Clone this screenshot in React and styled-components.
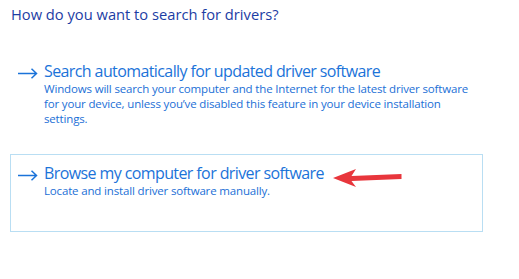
import styled, { createGlobalStyle } from "styled-components";

const Global = createGlobalStyle`
  html, body {
    margin: 0;
    padding: 0;
    background: #ffffff;
  }
  body {
    font-family: "Open Sans", "Noto Sans", "Liberation Sans", sans-serif;
  }
`;

const Page = styled.div`
  width: 519px;
  height: 279px;
  padding: 4px 0 0 10px;
  box-sizing: border-box;
  overflow: hidden;
`;

const Title = styled.h1`
  margin: 0 0 0 1px;
  font-size: 14.7px;
  font-weight: 400;
  line-height: 20px;
  color: #1c3da4;
`;

const Options = styled.div`
  display: flex;
  flex-direction: column;
  gap: 24px;
  margin-top: 28px;
  width: 473px;
`;

const Option = styled.div`
  position: relative;
  display: flex;
  align-items: flex-start;
  gap: 6px;
  padding: 8px 8px 0 7px;
  height: 78px;
  box-sizing: border-box;
  border: 1px solid ${(p) => (p.$active ? "#b9def3" : "transparent")};
`;

const Arrow = styled.svg`
  flex: none;
  margin-top: 7px;
`;

const Body = styled.div`
  display: flex;
  flex-direction: column;
`;

const Heading = styled.div`
  font-size: 16px;
  line-height: 20px;
  color: #1b73d9;
  letter-spacing: -0.6px;
  white-space: nowrap;
`;

const Desc = styled.div`
  font-size: 11.5px;
  line-height: 15px;
  color: #1b6fd6;
  letter-spacing: -0.16px;
  white-space: nowrap;
`;

const Pointer = styled.svg`
  position: absolute;
  left: 322px;
  top: 13px;
`;

const BlueArrow = () => (
  <Arrow width="20" height="11" viewBox="0 0 20 11">
    <path
      d="M0 5.5H18.5M13.5 0.8L18.5 5.5L13.5 10.2"
      fill="none"
      stroke="#1b73d9"
      strokeWidth="1.5"
    />
  </Arrow>
);

const App = () => {
  return (
    <>
      <Global />
      <Page>
        <Title>How do you want to search for drivers?</Title>
        <Options>
          <Option>
            <BlueArrow />
            <Body>
              <Heading>Search automatically for updated driver software</Heading>
              <Desc>
                Windows will search your computer and the Internet for the latest driver software
                <br />
                for your device, unless you’ve disabled this feature in your device installation
                <br />
                settings.
              </Desc>
            </Body>
          </Option>
          <Option $active>
            <BlueArrow />
            <Body>
              <Heading>Browse my computer for driver software</Heading>
              <Desc>Locate and install driver software manually.</Desc>
            </Body>
            <Pointer width="70" height="20" viewBox="0 0 70 20">
              <path
                d="M0 10L23 1L18.5 8L68.5 6L68.5 11L18.5 13L23 19Z"
                fill="#e8363c"
              />
            </Pointer>
          </Option>
        </Options>
      </Page>
    </>
  );
};

export default App;
